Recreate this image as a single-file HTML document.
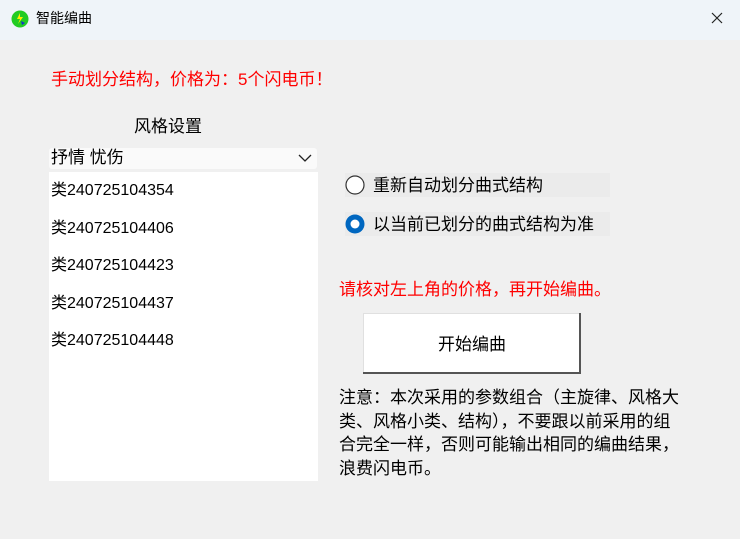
<!DOCTYPE html><html><head><meta charset="utf-8"><style>
body{margin:0;width:740px;height:539px;background:#f0f0f0;font-family:"Liberation Sans","Noto Sans CJK SC",sans-serif;position:relative;overflow:hidden;color:#000}
.a{position:absolute;white-space:nowrap;line-height:1.2}
</style></head><body>
<div class="a" style="left:0;top:0;width:740px;height:40px;background:#eff4f9"></div>
<svg class="a" style="left:11px;top:10px" width="18" height="18" viewBox="0 0 18 18"><circle cx="9" cy="9" r="8.5" fill="#22cc22"/><path d="M9 3 L6 9 H9 L7 14 L12 7 H9 Z" fill="#ffee00"/><path d="M10 11 L14 13 L11 15 Z" fill="#1133cc"/></svg>
<div class="a" style="left:36px;top:10px;font-size:14px">智能编曲</div>
<svg class="a" style="left:711px;top:12px" width="12" height="12"><path d="M1 1 L11 11 M11 1 L1 11" stroke="#222" stroke-width="1.2"/></svg>
<div class="a" style="left:51px;top:70px;font-size:17px;color:#ff0000">手动划分结构，价格为：5个闪电币！</div>
<div class="a" style="left:134px;top:117px;font-size:17px">风格设置</div>
<div class="a" style="left:49px;top:148px;width:268px;height:21px;background:#fafafa;border-radius:3px"></div>
<div class="a" style="left:51px;top:148px;font-size:17px">抒情 忧伤</div>
<svg class="a" style="left:298px;top:154px" width="14" height="9"><path d="M1 1 L7 7 L13 1" stroke="#222" stroke-width="1.3" fill="none"/></svg>
<div class="a" style="left:49px;top:172px;width:269px;height:309px;background:#fff"></div>
<div class="a" style="left:51px;top:172px;font-size:16px;line-height:37.6px">类240725104354<br>类240725104406<br>类240725104423<br>类240725104437<br>类240725104448</div>
<div class="a" style="left:345px;top:173px;width:265px;height:24px;background:#ebebeb"></div>
<div class="a" style="left:345px;top:212px;width:265px;height:24px;background:#ebebeb"></div>
<svg class="a" style="left:345px;top:175px" width="20" height="20"><circle cx="10" cy="10" r="9" fill="#fff" stroke="#333" stroke-width="1.2"/></svg>
<svg class="a" style="left:345px;top:214px" width="20" height="20"><circle cx="10" cy="10" r="9.5" fill="#0067c0"/><circle cx="10" cy="10" r="4.5" fill="#fff"/></svg>
<div class="a" style="left:373px;top:176px;font-size:17px">重新自动划分曲式结构</div>
<div class="a" style="left:373px;top:215px;font-size:17px">以当前已划分的曲式结构为准</div>
<div class="a" style="left:339px;top:280px;font-size:17px;color:#ff0000">请核对左上角的价格，再开始编曲。</div>
<div class="a" style="left:363px;top:313px;width:216px;height:59px;background:#fff;border-right:2px solid #555;border-bottom:2px solid #555;box-shadow:inset 1px 1px 0 #e0e0e0"></div>
<div class="a" style="left:438px;top:335px;font-size:17px">开始编曲</div>
<div class="a" style="left:339px;top:386px;font-size:17px;line-height:23.5px">注意：本次采用的参数组合（主旋律、风格大<br>类、风格小类、结构），不要跟以前采用的组<br>合完全一样，否则可能输出相同的编曲结果，<br>浪费闪电币。</div>
</body></html>
